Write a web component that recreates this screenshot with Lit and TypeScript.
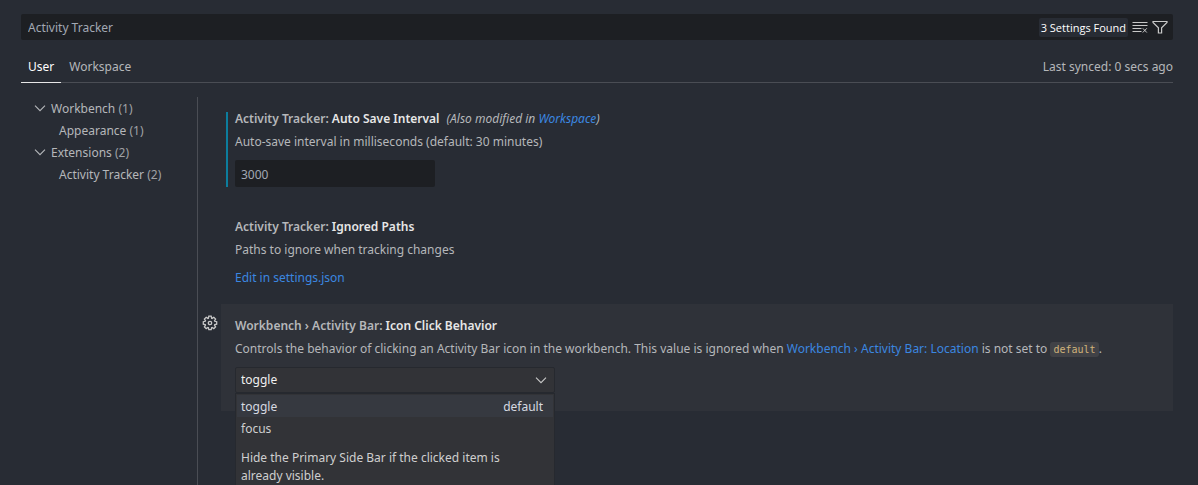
import { LitElement, html, css, svg } from "lit";
import { customElement, property } from "lit/decorators.js";

const chevron = svg`<path d="M3 5.700 8 10.700l5-5" fill="none" stroke="currentColor" stroke-width="1.1"/>`;

@customElement("settings-item")
class SettingsItem extends LitElement {
  @property() category = "";
  @property() label = "";
  @property({ type: Boolean, reflect: true }) modified = false;
  @property({ type: Boolean, reflect: true }) focused = false;

  static styles = css`
    :host { display: grid; grid-template-columns: 23px minmax(0, 1fr); }
    .gutter { padding-top: 11px; display: flex; justify-content: center; }
    .gear { width: 16px; height: 16px; padding: 0; border: 0; background: none; color: #c8c8c8; cursor: pointer; }
    .gear svg { display: block; }
    .row { padding: 15px 5px 18px; }
    .contents { border-left: 2px solid transparent; padding-left: 7px; }
    :host([modified]) .contents { border-color: #0c7d9d; }
    :host([focused]) .row { background: #2f3239; }
    .title { margin: 0; font-size: 12px; line-height: 14px; font-weight: 600; color: #b5b7ba; white-space: nowrap; }
    .name { color: #e7e7e7; }
    .note { font-weight: 400; font-style: italic; margin-left: 4px; }
    .text { margin: 7px 0 9px; line-height: 18px; }
  `;

  render() {
    return html`
      <div class="gutter">
        ${this.focused ? html`<button class="gear" aria-label="More actions">
          <svg width="16" height="16" viewBox="0 0 16 16" fill="none" stroke="currentColor">
            <path stroke-width="1.3" d="M6.8 1.2h2.4l.4 2 .5.2 1.7-1.1 1.8 1.8-1.1 1.7.2.5 2 .4v2.5l-2 .4-.2.5 1.1 1.7-1.8 1.8-1.7-1.1-.5.2-.4 2H6.8l-.4-2-.5-.2-1.7 1.1-1.8-1.8 1.1-1.7-.2-.5-2-.4V6.700l2-.4.2-.5-1.100-1.700 1.800-1.800 1.700 1.100.5-.2z"/>
            <circle cx="8" cy="8" r="1.700" stroke-width="1.300"/>
          </svg></button>` : ""}
      </div>
      <div class="row"><div class="contents">
        <h3 class="title">${this.category}: <span class="name">${this.label}</span> <span class="note"><slot name="note"></slot></span></h3>
        <div class="text"><slot name="text"></slot></div>
        <slot></slot>
      </div></div>`;
  }
}

@customElement("app-root")
class AppRoot extends LitElement {
  static styles = css`
    :host {
      display: flex; flex-direction: column; box-sizing: border-box; height: 100vh; overflow: hidden;
      padding: 14px 25px 0 21px; background: #282c34; color: #b5b7ba;
      font: 12px/18px "Noto Sans", "Open Sans", sans-serif;
    }
    * { box-sizing: border-box; }
    input, select, button { font: inherit; }
    a { color: #3b87e0; text-decoration: none; }
    .search { display: flex; align-items: center; height: 26px; flex: none; background: #1d1f23; border-radius: 2px; padding-right: 5px; }
    .query { flex: 1; min-width: 0; height: 26px; padding: 0 7px; border: 0; background: none; color: #a2a8b3; outline: 0; }
    .badge { height: 19px; line-height: 19px; padding: 0 2px; margin-right: 4px; border-radius: 2px; background: #282c34; color: #fff; font-family: "Open Sans", sans-serif; font-size: 11px; white-space: nowrap; }
    .action { width: 16px; height: 16px; padding: 0; border: 0; background: none; color: #c8c8c8; }
    .action + .action { margin-left: 4px; }
    .action svg { display: block; }
    .tabs { display: flex; gap: 1px; flex: none; height: 43px; padding-top: 10px; border-bottom: 1px solid #4a4d54; }
    .tab { height: 33px; padding: 1px 7px 0; border: 0; border-bottom: 1px solid transparent; background: none; color: #b5b7ba; }
    .tab.active { color: #fff; border-color: #e7e7e7; }
    .sync { margin-left: auto; line-height: 34px; }
    .body { flex: 1; min-height: 0; display: grid; grid-template-columns: 177px minmax(0, 1fr); padding-top: 14px; }
    .toc { border-right: 1px solid #4a4d54; margin: 0; }
    .toc ul { list-style: none; margin: 0; padding: 0; }
    .node { display: flex; align-items: center; height: 22px; line-height: 22px; gap: 3px; padding-left: 11px; }
    .node span { padding-top: 1px; }
    .node.child { padding-left: 38px; }
    .count { opacity: .85; }
    .number { display: block; width: 200px; height: 27px; padding: 2px 6px 0; border: 0; border-radius: 2px; background: #1d1f23; color: #a2a8b3; outline: 0; }
    .edit { display: block; padding-top: 1px; margin-bottom: -1px; }
    .code { font: 10px/13px "DejaVu Sans Mono", monospace; color: #d0b27a; background: #414247; border-radius: 3px; padding: 2px 3px; }
    .choice { position: relative; width: 320px; height: 26px; color: #c8c8c8; }
    .select { appearance: none; display: block; width: 320px; height: 26px; padding: 0 5px; border: 1px solid #26292f; border-radius: 2px; background: #323337; color: #f0f0f0; outline: 0; }
    .arrow { position: absolute; right: 6px; top: 5px; pointer-events: none; }
    .popup { position: absolute; top: 26px; left: 0; width: 320px; padding: 1px; border: 1px solid #26292f; background: #323337; color: #cfcfcf; }
    .options { list-style: none; margin: 0; padding: 0; }
    .option { display: flex; justify-content: space-between; height: 22px; line-height: 24px; padding: 0 10px 0 4px; }
    .option.current { background: #363940; color: #d7dae0; }
    .hint { margin: 0; padding: 10px 40px 9px 4px; }
  `;

  render() {
    const node = (name: string, count: number, child = false) => html`
      <li class="node ${child ? "child" : ""}">
        ${child ? "" : html`<svg width="16" height="16" viewBox="0 0 16 16">${chevron}</svg>`}
        <span>${name} <span class="count">(${count})</span></span>
      </li>`;
    return html`
      <div class="search">
        <input class="query" aria-label="Search settings" .value=${"Activity Tracker"}>
        <span class="badge">3 Settings Found</span>
        <button class="action" aria-label="Clear search"><svg width="16" height="16" viewBox="0 0 16 16" fill="none" stroke="currentColor">
          <path d="M.5 3.500h15M.5 6.500h15M.5 9.500h9M.5 12.500h9M10.800 9.300l4 4.200M14.800 9.300l-4 4.200"/></svg></button>
        <button class="action" aria-label="Filter settings"><svg width="16" height="16" viewBox="0 0 16 16" fill="none" stroke="currentColor" stroke-width="1.2">
          <path d="M1 2.500h14v1L9.600 8.800v5.200H6.400V8.800L1 3.500z"/></svg></button>
      </div>
      <div class="tabs">
        <button class="tab active">User</button>
        <button class="tab">Workspace</button>
        <span class="sync">Last synced: 0 secs ago</span>
      </div>
      <div class="body">
        <nav class="toc"><ul>
          ${node("Workbench", 1)}${node("Appearance", 1, true)}
          ${node("Extensions", 2)}${node("Activity Tracker", 2, true)}
        </ul></nav>
        <main>
          <settings-item modified category="Activity Tracker" label="Auto Save Interval">
            <span slot="note">(Also modified in <a href="#workspace">Workspace</a>)</span>
            <label slot="text" for="interval">Auto-save interval in milliseconds (default: 30 minutes)</label>
            <input class="number" id="interval" .value=${"3000"}>
          </settings-item>
          <settings-item category="Activity Tracker" label="Ignored Paths">
            <span slot="text">Paths to ignore when tracking changes</span>
            <a class="edit" href="#json">Edit in settings.json</a>
          </settings-item>
          <settings-item focused category="Workbench › Activity Bar" label="Icon Click Behavior">
            <label slot="text" for="behavior">Controls the behavior of clicking an Activity Bar icon in the workbench. This value is ignored when <a href="#location">Workbench › Activity Bar: Location</a> is not set to <code class="code">default</code>.</label>
            <div class="choice">
              <select class="select" id="behavior"><option>toggle</option><option>focus</option></select>
              <svg class="arrow" width="16" height="16" viewBox="0 0 16 16">${chevron}</svg>
              <div class="popup">
                <ul class="options" role="listbox" aria-label="Icon Click Behavior">
                  <li class="option current" role="option" aria-selected="true"><span>toggle</span><span>default</span></li>
                  <li class="option" role="option" aria-selected="false">focus</li>
                </ul>
                <p class="hint">Hide the Primary Side Bar if the clicked item is already visible.</p>
              </div>
            </div>
          </settings-item>
        </main>
      </div>`;
  }
}
